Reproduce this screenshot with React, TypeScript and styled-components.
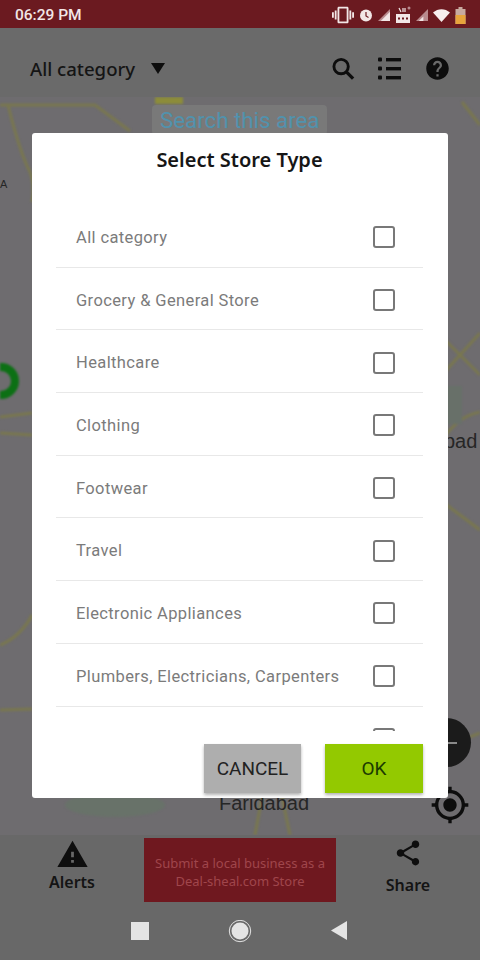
import React from 'react';
import styled, { createGlobalStyle } from 'styled-components';
import { MdHelp, MdWarning, MdShare, MdGpsFixed, MdVibration } from 'react-icons/md';

const GlobalStyle = createGlobalStyle`
  html, body {
    margin: 0;
    padding: 0;
    background: #686868;
  }
  * {
    box-sizing: border-box;
  }
`;

const Page = styled.div`
  position: relative;
  width: 480px;
  height: 960px;
  display: flex;
  flex-direction: column;
  overflow: hidden;
  background: #686868;
  font-family: 'Noto Sans', sans-serif;
`;

const StatusBar = styled.div`
  height: 28px;
  flex: none;
  display: flex;
  align-items: center;
  justify-content: space-between;
  padding: 2px 14px 0 15px;
  background: #6b1a20;
  color: #f2e6e6;
`;

const Time = styled.span`
  font-family: Roboto, sans-serif;
  font-weight: 500;
  font-size: 15.5px;
`;

const StatusIcons = styled.div`
  display: flex;
  align-items: center;
  gap: 5px;
`;

const Header = styled.div`
  height: 69px;
  flex: none;
  display: flex;
  align-items: center;
  padding: 12px 29px 0 30px;
  background: #6a6a6a;
  color: #0d0d0d;
`;

const CategoryLabel = styled.span`
  font-size: 18.6px;
  font-weight: 500;
  color: #151515;
`;

const Caret = styled.span`
  width: 0;
  height: 0;
  margin: 0 auto 0 16px;
  border-left: 7.5px solid transparent;
  border-right: 7.5px solid transparent;
  border-top: 11px solid #0d0d0d;
`;

const HeaderIcons = styled.div`
  display: flex;
  align-items: center;
  gap: 23px;
`;

const Map = styled.div`
  position: relative;
  flex: 1;
  background: #6e6c6f;
  overflow: hidden;
`;

const RoadLayer = styled.svg`
  position: absolute;
  inset: 0;
  filter: blur(1.2px);
`;

const SearchPill = styled.div`
  position: absolute;
  top: 8px;
  left: 152px;
  width: 175px;
  height: 30px;
  padding-left: 8px;
  border-radius: 4px;
  background: #797979;
  color: #5192ad;
  font-family: Roboto, sans-serif;
  font-size: 22.3px;
  line-height: 30px;
  white-space: nowrap;
`;

const MapLabel = styled.span<{ $x: number; $y: number; $size: number }>`
  position: absolute;
  left: ${p => p.$x}px;
  top: ${p => p.$y}px;
  color: #262626;
  font-family: 'Liberation Sans', sans-serif;
  font-size: ${p => p.$size}px;
  line-height: 1;
`;

const ZoomButton = styled.div`
  position: absolute;
  left: 422px;
  top: 621px;
  width: 49px;
  height: 49px;
  border-radius: 50%;
  background: #1b1b1b;
`;

const ZoomDash = styled.span`
  position: absolute;
  left: 26px;
  top: 24px;
  width: 9px;
  height: 2px;
  background: #8a8a8a;
`;

const LocateButton = styled.div`
  position: absolute;
  left: 430px;
  top: 688px;
  width: 40px;
  height: 40px;
  color: #0d0d0d;
`;

const Footer = styled.div`
  height: 70px;
  flex: none;
  display: grid;
  grid-template-columns: 144px 192px 144px;
  background: #686868;
  padding-top: 3px;
`;

const FooterAction = styled.div<{ $gap: number }>`
  display: flex;
  flex-direction: column;
  align-items: center;
  gap: ${p => p.$gap}px;
  color: #0e0e0e;
`;

const FooterLabel = styled.span`
  font-size: 16px;
  font-weight: 600;
  line-height: 20px;
  color: #141414;
`;

const Banner = styled.div`
  height: 64px;
  display: flex;
  align-items: center;
  justify-content: center;
  padding: 4px 8px 0;
  background: #6f181f;
  color: #a0464c;
  font-size: 13px;
  line-height: 18.5px;
  text-align: center;
`;

const NavBar = styled.div`
  height: 55px;
  flex: none;
  display: flex;
  align-items: flex-start;
  justify-content: center;
  gap: 78px;
  padding: 15px 3px 0 0;
  background: #686868;
`;

const Overlay = styled.div`
  position: absolute;
  inset: 0;
  padding: 133px 32px 0;
`;

const Dialog = styled.div`
  height: 665px;
  display: flex;
  flex-direction: column;
  padding: 0 25px 0 24px;
  border-radius: 3px;
  background: #ffffff;
`;

const Title = styled.h2`
  margin: 0;
  height: 72px;
  padding-top: 13px;
  flex: none;
  text-align: center;
  color: #161616;
  font-size: 20px;
  font-weight: 600;
  line-height: 28px;
`;

const List = styled.div`
  height: 526px;
  flex: none;
  overflow: hidden;
`;

const Row = styled.div`
  height: 62.7px;
  display: flex;
  align-items: center;
  justify-content: space-between;
  padding: 3px 28px 0 20px;
  border-bottom: 1.5px solid #e8e8e8;
  color: #7b7b7b;
  font-family: Roboto, sans-serif;
  font-size: 16.5px;
  letter-spacing: 0.38px;
`;

const Checkbox = styled.span`
  width: 22px;
  height: 22px;
  border: 2px solid #787878;
  border-radius: 3px;
`;

const Actions = styled.div`
  flex: none;
  display: flex;
  justify-content: flex-end;
  gap: 24px;
  padding-top: 13px;
`;

const ActionButton = styled.div<{ $bg: string; $color: string; $w: number }>`
  width: ${p => p.$w}px;
  height: 49px;
  display: flex;
  align-items: center;
  justify-content: center;
  background: ${p => p.$bg};
  color: ${p => p.$color};
  font-family: Roboto, sans-serif;
  font-size: 19px;
  box-shadow: 0 2px 3px rgba(0, 0, 0, 0.3);
`;

const categories = [
  'All category',
  'Grocery & General Store',
  'Healthcare',
  'Clothing',
  'Footwear',
  'Travel',
  'Electronic Appliances',
  'Plumbers, Electricians, Carpenters',
  '',
];

const roads = [
  'M0 8 H95 L130 34',
  'M8 8 C16 40 22 60 30 75 C34 85 34 95 32 105',
  'M462 5 L480 28',
  'M440 280 L480 236',
  'M440 238 L480 278',
  'M440 345 C455 325 465 318 480 315',
  'M440 403 L480 433',
  'M0 320 L32 316',
  'M0 336 L32 338',
  'M0 548 C14 543 26 530 32 518',
  'M0 613 L32 612',
  'M470 640 L480 636',
  'M255 738 L262 700',
  'M290 738 L282 700',
];

const SignalIcon = ({ faded }: { faded?: boolean }) => (
  <svg width="12" height="12" viewBox="0 0 13 13">
    <path d="M13 0V13H0Z" fill="#b88a8d" />
    {!faded && <path d="M13 3V13H3Z" fill="#f2e6e6" />}
    {faded && <path d="M8 8V13H3Z" fill="#f2e6e6" />}
  </svg>
);

const BoldSearch = () => (
  <svg width="23" height="24" viewBox="0 0 24 24">
    <circle cx="9.5" cy="9.5" r="7.5" fill="none" stroke="currentColor" strokeWidth="3" />
    <path d="M15 15L22 22" stroke="currentColor" strokeWidth="3.4" />
  </svg>
);

const BoldList = () => (
  <svg width="23" height="23" viewBox="0 0 23 23">
    <rect x="0" y="0.5" width="4" height="4" rx="1" fill="currentColor" />
    <rect x="0" y="9.5" width="4" height="4" rx="1" fill="currentColor" />
    <rect x="0" y="18.5" width="4" height="4" rx="1" fill="currentColor" />
    <rect x="8" y="1" width="15" height="3.4" fill="currentColor" />
    <rect x="8" y="10" width="15" height="3.4" fill="currentColor" />
    <rect x="8" y="19" width="15" height="3.4" fill="currentColor" />
  </svg>
);

export default function App() {
  return (
    <Page>
      <GlobalStyle />
      <StatusBar>
        <Time>06:29 PM</Time>
        <StatusIcons>
          <MdVibration size={22} />
          <svg width="14" height="14" viewBox="0 0 13 14">
            <circle cx="6.5" cy="7.5" r="6" fill="#f2e6e6" />
            <path d="M6.5 4V8L9 9.5" stroke="#6b1a20" strokeWidth="1.2" fill="none" />
          </svg>
          <SignalIcon />
          <svg width="16" height="18" viewBox="0 0 16 18">
            <rect x="1" y="8" width="14" height="9" fill="#f2e6e6" />
            <path d="M3 12.5h2M7 12.5h2M11 12.5h2" stroke="#6b1a20" strokeWidth="2" />
            <path d="M4 2L6 6M8 2V6M10 2V6" stroke="#f2e6e6" strokeWidth="1.2" />
            <circle cx="14" cy="2" r="1.5" fill="#b88a8d" />
          </svg>
          <SignalIcon faded />
          <svg width="17" height="13" viewBox="0 0 17 13">
            <path d="M0 3.5C5 -1 12 -1 17 3.5L8.5 13Z" fill="#f7eeee" />
          </svg>
          <svg width="11" height="17" viewBox="0 0 10 17">
            <path d="M3 0H7V2H10V17H0V2H3Z" fill="#c8a9a0" />
            <path d="M0 8H10V17H0Z" fill="#e8a33c" />
          </svg>
        </StatusIcons>
      </StatusBar>

      <Header>
        <CategoryLabel>All category</CategoryLabel>
        <Caret />
        <HeaderIcons>
          <BoldSearch />
          <BoldList />
          <MdHelp size={27} />
        </HeaderIcons>
      </Header>

      <Map>
        <RoadLayer width="480" height="738" viewBox="0 0 480 738">
          {roads.map(d => (
            <path key={d} d={d} stroke="#79774f" strokeWidth="3" fill="none" />
          ))}
          <rect x="155" y="0" width="28" height="7" fill="#8c8c3a" />
          <rect x="440" y="289" width="22" height="38" fill="#687069" />
          <ellipse cx="115" cy="708" rx="50" ry="12" fill="#687269" />
          <circle cx="1" cy="284" r="14" fill="none" stroke="#0c7014" strokeWidth="8" />
        </RoadLayer>
        <SearchPill>Search this area</SearchPill>
        <MapLabel $x={0} $y={82} $size={11}>A</MapLabel>
        <MapLabel $x={444} $y={334} $size={20}>pad</MapLabel>
        <MapLabel $x={219} $y={696} $size={20}>Faridabad</MapLabel>
        <ZoomButton>
          <ZoomDash />
        </ZoomButton>
        <LocateButton>
          <MdGpsFixed size={40} />
        </LocateButton>
      </Map>

      <Footer>
        <FooterAction $gap={1}>
          <MdWarning size={33} />
          <FooterLabel>Alerts</FooterLabel>
        </FooterAction>
        <Banner>Submit a local business as a Deal-sheal.com Store</Banner>
        <FooterAction $gap={7}>
          <MdShare size={30} />
          <FooterLabel>Share</FooterLabel>
        </FooterAction>
      </Footer>

      <NavBar>
        <svg width="20" height="20" viewBox="0 0 20 20">
          <rect x="1" y="2" width="18" height="18" fill="#e4e4e4" />
        </svg>
        <svg width="24" height="24" viewBox="0 0 24 24">
          <circle cx="12" cy="11" r="8.5" fill="#e4e4e4" />
          <circle cx="12" cy="11" r="10.7" fill="none" stroke="#e4e4e4" />
        </svg>
        <svg width="18" height="20" viewBox="0 0 18 20">
          <path d="M17 1V20L1 10.5Z" fill="#e4e4e4" />
        </svg>
      </NavBar>

      <Overlay>
        <Dialog>
          <Title>Select Store Type</Title>
          <List>
            {categories.map(name => (
              <Row key={name || 'next'}>
                <span>{name}</span>
                <Checkbox />
              </Row>
            ))}
          </List>
          <Actions>
            <ActionButton $bg="#aeaeae" $color="#222222" $w={97}>CANCEL</ActionButton>
            <ActionButton $bg="#93c900" $color="#1c3b00" $w={98}>OK</ActionButton>
          </Actions>
        </Dialog>
      </Overlay>
    </Page>
  );
}
